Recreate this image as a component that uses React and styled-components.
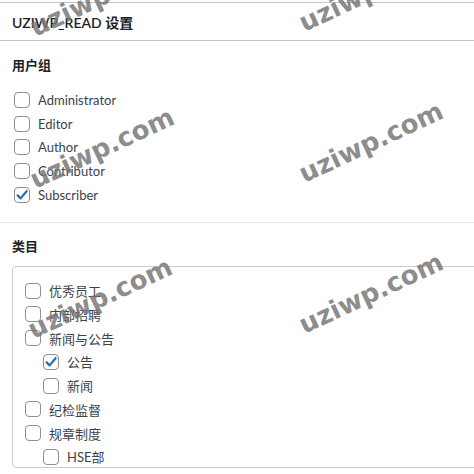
import styled, { createGlobalStyle } from "styled-components";

const GlobalStyle = createGlobalStyle`
  html, body {
    margin: 0;
    padding: 0;
    background: #fff;
    overflow: hidden;
  }
  body {
    font-family: Lato, "Noto Sans CJK SC", sans-serif;
    color: #3c434a;
  }
`;

const Page = styled.div`
  position: relative;
  width: 474px;
  height: 474px;
  overflow: hidden;
`;

const Panel = styled.div`
  margin-top: 2px;
  border-top: 1px solid #c3c4c7;
`;

const PanelHeader = styled.h2`
  margin: 0;
  height: 37px;
  padding: 0 12px;
  display: flex;
  align-items: center;
  font-size: 14px;
  font-weight: 600;
  color: #1d2327;
  border-bottom: 1px solid #c3c4c7;
`;

const Section = styled.div`
  padding: ${(p) => p.$pad};
  border-bottom: ${(p) => (p.$divider ? "1px solid #e4e4e4" : "none")};
`;

const SectionTitle = styled.div`
  margin: ${(p) => p.$margin};
  line-height: 20px;
  font-size: 13px;
  font-weight: 700;
  color: #1d2327;
`;

const List = styled.div`
  display: flex;
  flex-direction: column;
`;

const Row = styled.label`
  display: flex;
  align-items: center;
  height: 23.75px;
  padding-left: ${(p) => (p.$nested ? 18 : 0)}px;
  font-size: 13px;
  color: #3c434a;
`;

const Box = styled.span`
  flex: none;
  width: 14px;
  height: 14px;
  margin: 0 8px 0 2px;
  border: 1px solid #8c8f94;
  border-radius: 4px;
  background: #fff;
  display: flex;
  align-items: center;
  justify-content: center;
`;

const Checklist = styled.div`
  width: 520px;
  height: 200px;
  border: 1px solid #c9cbce;
  border-radius: 4px;
  padding: 12px 0 0 10px;
  box-sizing: border-box;
  height: 202px;
  overflow: hidden;
`;

const Watermark = styled.div`
  position: absolute;
  left: ${(p) => p.$x}px;
  top: ${(p) => p.$y}px;
  transform: translate(-50%, -50%) rotate(-25deg);
  font-family: "DejaVu Sans", sans-serif;
  font-weight: 700;
  font-size: 26px;
  color: rgba(120, 120, 120, 0.85);
  white-space: nowrap;
  pointer-events: none;
`;

function Check({ checked }) {
  return (
    <Box>
      {checked && (
        <svg width="14" height="14" viewBox="0 0 14 14">
          <path d="M2.6 7.4 L5.6 10.4 L11.6 3.2" fill="none" stroke="#2271b1" strokeWidth="2.2" strokeLinecap="round" strokeLinejoin="round" />
        </svg>
      )}
    </Box>
  );
}

const roles = [
  { name: "Administrator" },
  { name: "Editor" },
  { name: "Author" },
  { name: "Contributor" },
  { name: "Subscriber", checked: true },
];

const cats = [
  { name: "优秀员工" },
  { name: "内部招聘" },
  { name: "新闻与公告" },
  { name: "公告", nested: true, checked: true },
  { name: "新闻", nested: true },
  { name: "纪检监督" },
  { name: "规章制度" },
  { name: "HSE部", nested: true },
];

const marks = [
  [102, -4], [371, -9],
  [102, 148], [371, 142],
  [100, 298], [371, 293],
];

export default function App() {
  return (
    <>
      <GlobalStyle />
      <Page>
        <Panel>
          <PanelHeader>UZIWP_READ 设置</PanelHeader>
          <Section $pad="0 12px 15px" $divider>
            <SectionTitle $margin="14px 0 13px">用户组</SectionTitle>
            <List>
              {roles.map((r) => (
                <Row key={r.name}>
                  <Check checked={r.checked} />
                  {r.name}
                </Row>
              ))}
            </List>
          </Section>
          <Section $pad="0 0 0 12px">
            <SectionTitle $margin="13px 0 10px">类目</SectionTitle>
            <Checklist>
              <List>
                {cats.map((c) => (
                  <Row key={c.name} $nested={c.nested}>
                    <Check checked={c.checked} />
                    {c.name}
                  </Row>
                ))}
              </List>
            </Checklist>
          </Section>
        </Panel>
        {marks.map(([x, y], i) => (
          <Watermark key={i} $x={x} $y={y}>uziwp.com</Watermark>
        ))}
      </Page>
    </>
  );
}
